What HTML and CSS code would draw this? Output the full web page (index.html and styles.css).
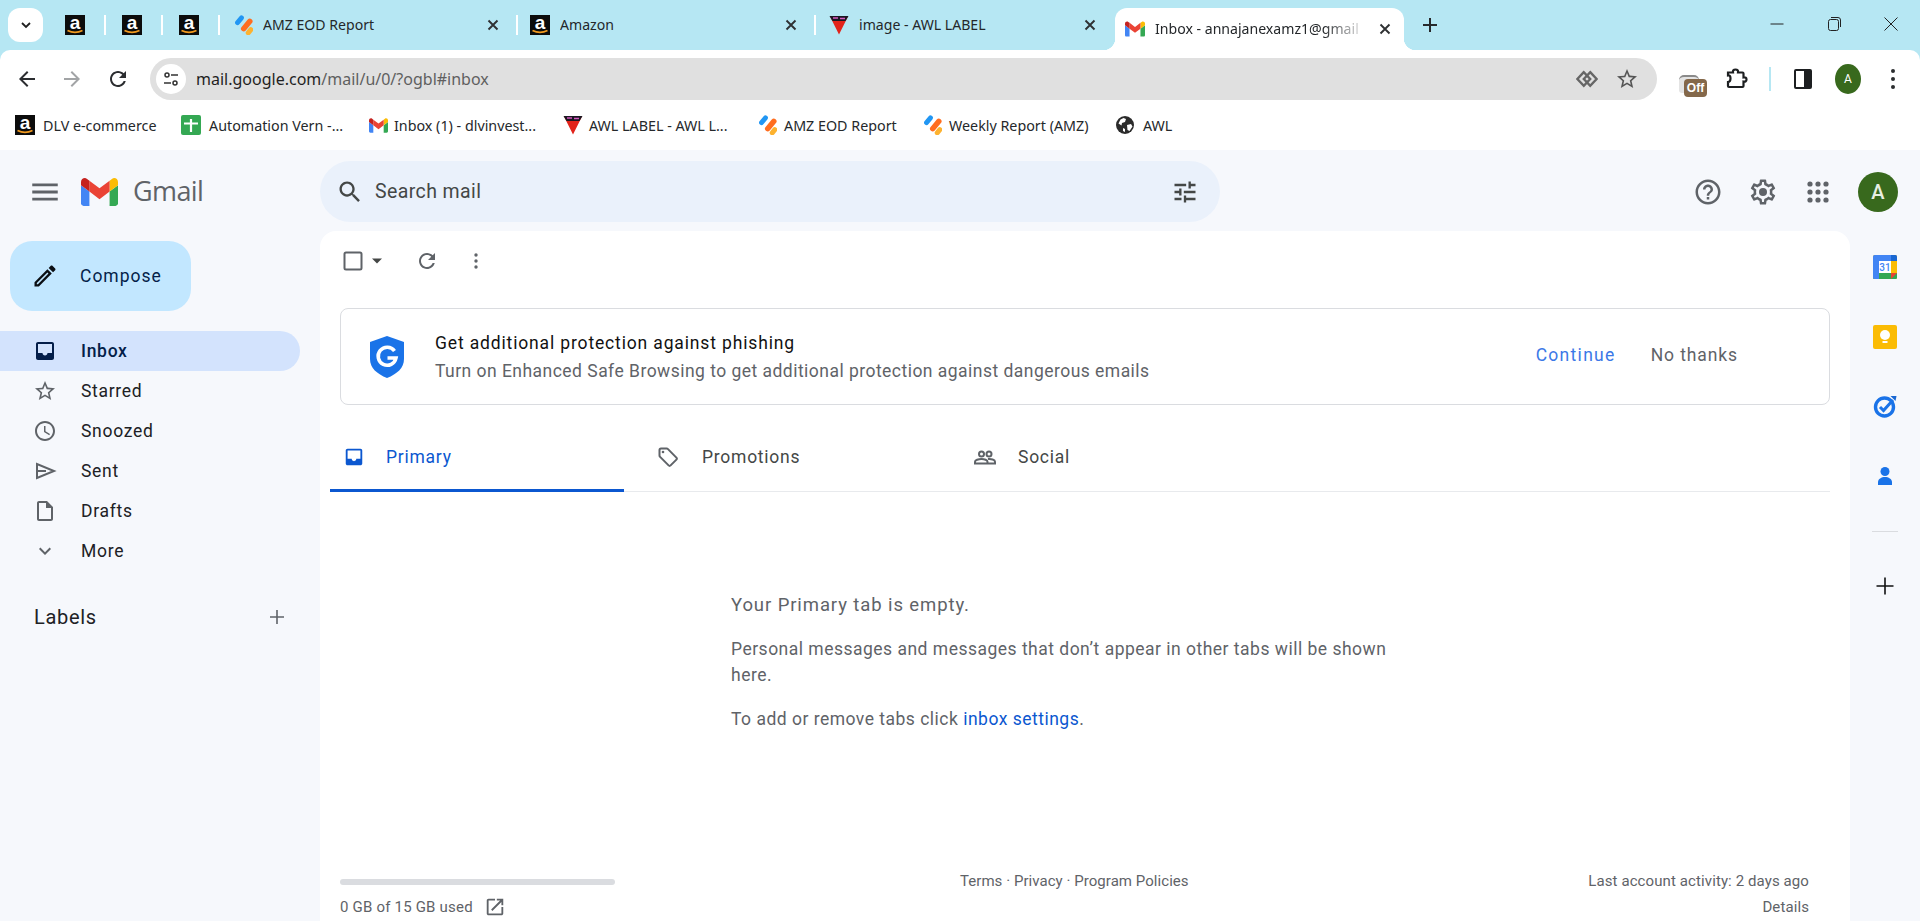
FILE: index.html
```html
<!DOCTYPE html>
<html lang="en">
<head>
<meta charset="utf-8">
<title>Inbox - Gmail</title>
<link rel="stylesheet" href="styles.css">
</head>
<body>
<svg class="defs" aria-hidden="true">
  <symbol id="gm" viewBox="52 42 88 66"><path fill="#4285f4" d="M58 108h14V74L52 59v43c0 3.32 2.69 6 6 6"/><path fill="#34a853" d="M120 108h14c3.32 0 6-2.69 6-6V59l-20 15"/><path fill="#fbbc04" d="M120 48v26l20-15v-8c0-7.42-8.47-11.65-14.4-7.2"/><path fill="#ea4335" d="M72 74V48l24 18 24-18v26L96 92"/><path fill="#c5221f" d="M52 51v8l20 15V48l-5.6-4.2c-5.94-4.45-14.4-.22-14.4 7.2"/></symbol>
  <symbol id="az" viewBox="0 0 20 20"><rect width="20" height="20" fill="#0c0c0c"/><text x="10" y="13.500" font-family="Liberation Sans" font-weight="700" font-size="19" fill="#fff" text-anchor="middle">a</text><path d="M2.500 15.500q7.500 3.600 15 0" fill="none" stroke="#f29a1f" stroke-width="1.800"/></symbol>
  <symbol id="amz" viewBox="0 0 20 20"><rect width="4.800" height="11" rx="2.400" transform="translate(8.200 -.5) rotate(40)" fill="#2196f3"/><rect width="5.400" height="15" rx="2.700" transform="translate(16.500 2.500) rotate(40)" fill="#ff6d1f"/><rect width="5" height="9" rx="2.500" transform="translate(17.500 11.200) rotate(40)" fill="#fdb22f"/></symbol>
  <symbol id="awl" viewBox="0 0 20 20"><path d="M1 1.500h18L10 19.500z" fill="#e2231a"/><path d="M.5 1h19l-3 5h-13z" fill="#1b1722"/><path d="M4 3h5M11 3.500h5" stroke="#d659c0" stroke-width="1.300"/></symbol>
  <symbol id="globe" viewBox="0 0 20 20"><circle cx="10" cy="10" r="9" fill="#2b2b2b"/><path d="M5.500 4.500l3-1.500 2.500 1-1 3-3 1-.5 2.500-3-2zM12 10l4-1 1.500 2.500-3 4.500-2-1zM8 13l2 1v3l-2-1z" fill="#fff"/></symbol>
  <symbol id="x" viewBox="0 0 16 16"><path d="M3.500 3.500l9 9m0-9l-9 9" stroke="#2f3133" stroke-width="1.900" fill="none"/></symbol>
  <symbol id="inboxfill" viewBox="0 0 24 24"><path d="M19 3H5c-1.100 0-2 .9-2 2v14c0 1.100.9 2 2 2h14c1.100 0 2-.9 2-2V5c0-1.100-.9-2-2-2zm0 11h-4.500c0 1.400-1.100 2.500-2.500 2.500S9.500 15.400 9.500 14H5V5h14z"/></symbol>
</svg>

<header class="tabstrip">
  <button class="tabsearch"><svg class="i12" viewBox="0 0 12 12"><path d="M2 4l4 4 4-4" fill="none" stroke="#1f1f1f" stroke-width="1.800"/></svg></button>
  <div class="tab pin"><svg class="fav"><use href="#az"/></svg></div>
  <div class="tab pin"><svg class="fav"><use href="#az"/></svg></div>
  <div class="tab pin"><svg class="fav"><use href="#az"/></svg></div>
  <div class="tab wide"><svg class="fav"><use href="#amz"/></svg><span class="tabtitle">AMZ EOD Report</span><svg class="tabx"><use href="#x"/></svg></div>
  <div class="tab wide"><svg class="fav"><use href="#az"/></svg><span class="tabtitle">Amazon</span><svg class="tabx"><use href="#x"/></svg></div>
  <div class="tab wide last"><svg class="fav"><use href="#awl"/></svg><span class="tabtitle">image - AWL LABEL</span><svg class="tabx"><use href="#x"/></svg></div>
  <div class="tab active"><svg class="fav"><use href="#gm"/></svg><span class="tabtitle fade">Inbox - annajanexamz1@gmail</span><svg class="tabx"><use href="#x"/></svg></div>
  <svg class="newtab" viewBox="0 0 24 24"><path d="M19 13h-6v6h-2v-6H5v-2h6V5h2v6h6v2z" fill="#27292b"/></svg>
  <div class="winctl">
    <svg class="win" viewBox="0 0 16 16"><path d="M1.500 8h13" stroke="#222" fill="none"/></svg>
    <svg class="win" viewBox="0 0 16 16"><rect x="2.500" y="3.500" width="10" height="11" rx="2" fill="none" stroke="#222"/><path d="M5 1.500h7q2.500 0 2.500 2.500v7" fill="none" stroke="#222"/></svg>
    <svg class="win" viewBox="0 0 16 16"><path d="M1.500 1.500l13 13m0-13l-13 13" stroke="#222" fill="none"/></svg>
  </div>
</header>

<nav class="toolbar">
  <svg class="tb back" viewBox="0 0 24 24"><path d="M20 11H7.830l5.590-5.590L12 4l-8 8 8 8 1.410-1.410L7.830 13H20v-2z" fill="#2b2d30"/></svg>
  <svg class="tb fwd" viewBox="0 0 24 24"><path d="M12 4l-1.410 1.410L16.170 11H4v2h12.170l-5.580 5.590L12 20l8-8z" fill="#a2a4a6"/></svg>
  <svg class="tb rel" viewBox="0 0 24 24"><path d="M17.650 6.350C16.200 4.900 14.210 4 12 4c-4.420 0-7.990 3.580-7.990 8s3.570 8 7.990 8c3.730 0 6.840-2.550 7.730-6h-2.080c-.82 2.330-3.040 4-5.650 4-3.310 0-6-2.690-6-6s2.690-6 6-6c1.660 0 3.140.69 4.220 1.780L13 11h7V4l-2.350 2.350z" fill="#2b2d30"/></svg>
  <div class="omni">
    <span class="site"><svg class="i18" viewBox="0 0 18 18"><circle cx="5" cy="5" r="2" fill="none" stroke="#333" stroke-width="1.500"/><path d="M9 5h7M2 13h7" stroke="#333" stroke-width="1.500"/><circle cx="13" cy="13" r="2" fill="none" stroke="#333" stroke-width="1.500"/></svg></span>
    <span class="url"><b>mail.google.com</b>/mail/u/0/?ogbl#inbox</span>
    <svg class="omnikey" viewBox="0 0 24 24"><path d="M8.500 4.500L1.500 12l7 7.500 7-7.500z" fill="none" stroke="#666" stroke-width="2.600"/><path d="M15.500 4.500l7 7.500-7 7.500-7-7.500z" fill="none" stroke="#666" stroke-width="2.600"/></svg>
    <svg class="omnistar" viewBox="0 0 24 24"><path d="M22 9.240l-7.190-.62L12 2 9.190 8.630 2 9.240l5.460 4.730L5.820 21 12 17.270 18.180 21l-1.630-7.030L22 9.240zM12 15.400l-3.760 2.270 1-4.280-3.320-2.880 4.380-.38L12 6.100l1.710 4.040 4.380.38-3.320 2.880 1 4.280L12 15.400z" fill="#555"/></svg>
  </div>
  <div class="ext"><span class="extcup"></span><span class="offbadge">Off</span></div>
  <svg class="puzzle" viewBox="0 0 24 24"><path d="M4 5.500h5q-.5-3 2.500-3t2.500 3h4.500q1 0 1 1v4q3-.5 3 2t-3 2v4.500q0 1-1 1H5q-1 0-1-1v-4q2.500 0 2.500-3.500T4 8.500z" fill="none" stroke="#1d1f21" stroke-width="2.200"/></svg>
  <span class="tbsep"></span>
  <svg class="panelicon" viewBox="0 0 20 24"><rect x="1" y="2" width="18" height="20" rx="2" fill="#1d1f21"/><rect x="3" y="4" width="8" height="16" fill="#fff"/></svg>
  <span class="miniavatar">A</span>
  <svg class="chromemenu" viewBox="0 0 6 22"><circle cx="3" cy="3" r="2" fill="#2b2d30"/><circle cx="3" cy="11" r="2" fill="#2b2d30"/><circle cx="3" cy="19" r="2" fill="#2b2d30"/></svg>
</nav>

<div class="bookmarks">
  <a class="bm b1"><svg class="fav"><use href="#az"/></svg>DLV e-commerce</a>
  <a class="bm b2"><svg class="fav" viewBox="0 0 20 20"><rect width="20" height="20" rx="2" fill="#34a853"/><path d="M3 8.500h14M10 4v13" stroke="#fff" stroke-width="2.200"/></svg>Automation Vern -...</a>
  <a class="bm b3"><svg class="fav gmfav"><use href="#gm"/></svg>Inbox (1) - dlvinvest...</a>
  <a class="bm b4"><svg class="fav"><use href="#awl"/></svg>AWL LABEL - AWL L...</a>
  <a class="bm b5"><svg class="fav"><use href="#amz"/></svg>AMZ EOD Report</a>
  <a class="bm b6"><svg class="fav"><use href="#amz"/></svg>Weekly Report (AMZ)</a>
  <a class="bm"><svg class="fav"><use href="#globe"/></svg>AWL</a>
</div>

<div class="gmail">
  <div class="ghead">
    <div class="brand">
      <svg class="menuicon" viewBox="0 0 24 24"><path d="M3 18h18v-2H3v2zm0-5h18v-2H3v2zm0-7v2h18V6H3z" fill="#5f6368"/></svg>
      <svg class="logo"><use href="#gm"/></svg>
      <span class="wordmark">Gmail</span>
    </div>
    <div class="search">
      <svg class="i24" viewBox="0 0 24 24"><path d="M15.500 14h-.79l-.28-.27C15.410 12.590 16 11.110 16 9.500 16 5.910 13.090 3 9.500 3S3 5.910 3 9.500 5.910 16 9.500 16c1.610 0 3.090-.59 4.230-1.570l.27.28v.79l5 4.990L20.490 19l-4.990-5zm-6 0C7.010 14 5 11.990 5 9.500S7.010 5 9.500 5 14 7.010 14 9.500 11.990 14 9.500 14z" fill="#444746"/></svg>
      <span class="searchtext">Search mail</span>
      <svg class="i28" viewBox="0 0 24 24"><path d="M3 17v2h6v-2H3zM3 5v2h10V5H3zm10 16v-2h8v-2h-8v-2h-2v6h2zM7 9v2H3v2h4v2h2V9H7zm14 4v-2H11v2h10zm-6-4h2V7h4V5h-4V3h-2v6z" fill="#444746"/></svg>
    </div>
    <div class="gactions">
      <svg class="act" viewBox="0 0 24 24"><path d="M11 18h2v-2h-2v2zm1-16C6.480 2 2 6.480 2 12s4.480 10 10 10 10-4.480 10-10S17.520 2 12 2zm0 18c-4.410 0-8-3.590-8-8s3.590-8 8-8 8 3.590 8 8-3.590 8-8 8zm0-14c-2.210 0-4 1.790-4 4h2c0-1.100.9-2 2-2s2 .9 2 2c0 2-3 1.750-3 5h2c0-2.250 3-2.500 3-5 0-2.210-1.790-4-4-4z" fill="#5f6368"/></svg>
      <svg class="act gear" viewBox="0 0 24 24"><path d="M19.430 12.980c.04-.32.07-.64.07-.98 0-.34-.03-.66-.07-.98l2.110-1.650c.19-.15.24-.42.12-.64l-2-3.460c-.09-.16-.26-.25-.44-.25-.06 0-.12.01-.17.03l-2.490 1c-.52-.4-1.080-.73-1.690-.98l-.38-2.650C14.460 2.180 14.250 2 14 2h-4c-.25 0-.46.18-.49.42l-.38 2.650c-.61.25-1.170.59-1.690.98l-2.490-1c-.06-.02-.12-.03-.18-.03-.17 0-.34.09-.43.25l-2 3.460c-.13.22-.07.49.12.64l2.110 1.650c-.04.32-.07.65-.07.98 0 .33.03.66.07.98l-2.110 1.650c-.19.15-.24.42-.12.64l2 3.460c.09.16.26.25.44.25.06 0 .12-.01.17-.03l2.490-1c.52.4 1.080.73 1.690.98l.38 2.650c.03.24.24.42.49.42h4c.25 0 .46-.18.49-.42l.38-2.650c.61-.25 1.170-.59 1.690-.98l2.490 1c.06.02.12.03.18.03.17 0 .34-.09.43-.25l2-3.460c.12-.22.07-.49-.12-.64l-2.110-1.650zm-1.980-1.710c.04.31.05.52.05.73 0 .21-.02.43-.05.73l-.14 1.130.89.7 1.080.84-.7 1.210-1.270-.51-1.040-.42-.9.68c-.43.32-.84.56-1.250.73l-1.060.43-.16 1.130-.2 1.350h-1.400l-.19-1.350-.16-1.130-1.060-.43c-.43-.18-.83-.41-1.230-.71l-.91-.7-1.060.43-1.270.51-.7-1.210 1.080-.84.89-.7-.14-1.130c-.03-.31-.05-.54-.05-.74s.02-.43.05-.73l.14-1.130-.89-.7-1.080-.84.7-1.210 1.270.51 1.040.42.9-.68c.43-.32.84-.56 1.250-.73l1.060-.43.16-1.130.2-1.350h1.390l.19 1.350.16 1.130 1.060.43c.43.18.83.41 1.230.71l.91.7 1.060-.43 1.270-.51.7 1.210-1.070.85-.89.7.14 1.130z" fill="#5f6368"/><circle cx="12" cy="12" r="3.200" fill="#5f6368"/></svg>
      <svg class="apps" viewBox="0 0 24 24"><g fill="#5f6368"><circle cx="4" cy="4" r="2.600"/><circle cx="12" cy="4" r="2.600"/><circle cx="20" cy="4" r="2.600"/><circle cx="4" cy="12" r="2.600"/><circle cx="12" cy="12" r="2.600"/><circle cx="20" cy="12" r="2.600"/><circle cx="4" cy="20" r="2.600"/><circle cx="12" cy="20" r="2.600"/><circle cx="20" cy="20" r="2.600"/></g></svg>
      <span class="bigavatar">A</span>
    </div>
  </div>

  <aside class="sidebar">
    <button class="compose"><svg class="i28" viewBox="0 0 24 24"><path d="M3 17.250V21h3.750L17.810 9.940l-3.750-3.750L3 17.250zM5.920 19H5v-.92l9.060-9.060.92.92L5.920 19zM20.710 7.040c.39-.39.39-1.020 0-1.410l-2.340-2.340c-.2-.2-.45-.29-.71-.29s-.51.1-.7.29l-1.830 1.830 3.750 3.750 1.830-1.830z" fill="#0b0f14"/></svg><span>Compose</span></button>
    <ul class="nav">
      <li class="navrow current"><svg class="i24 navinbox"><use href="#inboxfill"/></svg>Inbox</li>
      <li class="navrow"><svg class="i24" viewBox="0 0 24 24"><path d="M22 9.240l-7.190-.62L12 2 9.190 8.630 2 9.240l5.460 4.730L5.820 21 12 17.270 18.180 21l-1.630-7.030L22 9.240zM12 15.400l-3.760 2.270 1-4.280-3.320-2.880 4.380-.38L12 6.100l1.710 4.040 4.380.38-3.320 2.880 1 4.280L12 15.400z" fill="#5f6368"/></svg>Starred</li>
      <li class="navrow"><svg class="i24" viewBox="0 0 24 24"><path d="M11.990 2C6.470 2 2 6.480 2 12s4.470 10 9.990 10C17.520 22 22 17.520 22 12S17.520 2 11.990 2zM12 20c-4.420 0-8-3.580-8-8s3.580-8 8-8 8 3.580 8 8-3.580 8-8 8zm.5-13H11v6l5.250 3.150.75-1.230-4.500-2.670z" fill="#5f6368"/></svg>Snoozed</li>
      <li class="navrow"><svg class="i24" viewBox="0 0 24 24"><path d="M4 5v14l17-7z M4 12h9" fill="none" stroke="#5f6368" stroke-width="2"/></svg>Sent</li>
      <li class="navrow"><svg class="i24" viewBox="0 0 24 24"><path d="M14 2H6c-1.100 0-1.990.9-1.990 2L4 20c0 1.100.89 2 1.990 2H18c1.100 0 2-.9 2-2V8l-6-6zM6 20V4h7v5h5v11H6z" fill="#5f6368"/></svg>Drafts</li>
      <li class="navrow"><svg class="i24" viewBox="0 0 24 24"><path d="M16.590 8.590L12 13.170 7.410 8.590 6 10l6 6 6-6z" fill="#5f6368"/></svg>More</li>
    </ul>
    <div class="labels"><span>Labels</span><svg class="i24" viewBox="0 0 24 24"><path d="M19 12.800h-6.200V19h-1.600v-6.200H5v-1.600h6.200V5h1.600v6.200H19z" fill="#5f6368"/></svg></div>
  </aside>

  <main class="panel">
    <div class="listbar">
      <svg class="chk" viewBox="0 0 20 20"><rect x="1.500" y="1.500" width="17" height="17" rx="1.500" fill="none" stroke="#5f6368" stroke-width="2"/></svg>
      <svg class="caret" viewBox="0 0 10 6"><path d="M0 .5h10L5 5.500z" fill="#444746"/></svg>
      <svg class="i20 ref" viewBox="0 0 24 24"><path d="M17.650 6.350C16.200 4.900 14.210 4 12 4c-4.420 0-7.990 3.580-7.990 8s3.570 8 7.990 8c3.730 0 6.840-2.550 7.730-6h-2.080c-.82 2.330-3.040 4-5.650 4-3.310 0-6-2.690-6-6s2.690-6 6-6c1.660 0 3.140.69 4.220 1.780L13 11h7V4l-2.350 2.350z" fill="#5f6368"/></svg>
      <svg class="dots" viewBox="0 0 4 16"><circle cx="2" cy="2" r="1.700" fill="#5f6368"/><circle cx="2" cy="8" r="1.700" fill="#5f6368"/><circle cx="2" cy="14" r="1.700" fill="#5f6368"/></svg>
    </div>

    <section class="banner">
      <svg class="shield" viewBox="0 0 36 42"><path d="M18 0l17 6v17c0 9-7 15-17 19C8 38 1 32 1 23V6z" fill="#1a73e8"/><path d="M25.500 16a9 9 0 1 0 1.500 7h-8.500" fill="none" stroke="#fff" stroke-width="3.600" transform="translate(0 -1)"/></svg>
      <div class="bantext">
        <div class="bantitle">Get additional protection against phishing</div>
        <div class="bansub">Turn on Enhanced Safe Browsing to get additional protection against dangerous emails</div>
      </div>
      <a class="continue">Continue</a>
      <a class="nothanks">No thanks</a>
    </section>

    <div class="tabs">
      <div class="gtab on"><svg class="i22"><use href="#inboxfill"/></svg><span>Primary</span></div>
      <div class="gtab promo"><svg class="i24" viewBox="0 0 24 24"><path d="M3.500 5v5.500q0 .8.600 1.400l8.500 8.500q1 1 2 0l5.800-5.800q1-1 0-2L12 4.100q-.6-.6-1.400-.6H5Q3.500 3.500 3.500 5z" fill="none" stroke="#5f6368" stroke-width="2"/><circle cx="7" cy="7" r="1.300" fill="#5f6368"/></svg><span>Promotions</span></div>
      <div class="gtab soc"><svg class="i24" viewBox="0 0 24 24"><g fill="none" stroke="#5f6368" stroke-width="2"><circle cx="8.500" cy="9" r="2.500"/><circle cx="16" cy="9" r="2.500"/><path d="M2 18.500v-1.800c0-1.500 3.500-2.700 6.500-2.700s6 1.200 6 2.700v1.800zM15 14.100c3-.5 7 .8 7 2.600v1.800h-7"/></g></svg><span>Social</span></div>
    </div>

    <div class="empty">
      <p class="emptyhead">Your Primary tab is empty.</p>
      <p class="emptymsg">Personal messages and messages that don’t appear in other tabs will be shown here.</p>
      <p class="emptylink">To add or remove tabs click <a>inbox settings</a>.</p>
    </div>

    <footer class="foot">
      <div class="storage">
        <div class="storebar"></div>
        <div class="storetext">0 GB of 15 GB used <svg class="i22 storeopen" viewBox="0 0 24 24"><path d="M19 19H5V5h7V3H5c-1.110 0-2 .9-2 2v14c0 1.100.89 2 2 2h14c1.100 0 2-.9 2-2v-7h-2v7zM14 3v2h3.590l-9.830 9.830 1.410 1.410L19 6.410V10h2V3h-7z" fill="#5f6368"/></svg></div>
      </div>
      <div class="terms">Terms · Privacy · Program Policies</div>
      <div class="activity"><div>Last account activity: 2 days ago</div><div class="details">Details</div></div>
    </footer>
  </main>

  <aside class="addons">
    <div class="addon"><svg class="i24" viewBox="0 0 24 24"><rect width="24" height="24" rx="1.500" fill="#fbbc04"/><path d="M0 18h24v4.500q0 1.500-1.500 1.500H1.500Q0 24 0 22.500z" fill="#34a853"/><path d="M0 1.500Q0 0 1.500 0H18v6H6v18H1.500Q0 24 0 22.500z" fill="#4285f4"/><path d="M18 0h4.500Q24 0 24 1.500V6h-6z" fill="#1967d2"/><rect x="6" y="6" width="12" height="12" fill="#fff"/><path d="M18 18h6l-6 6z" fill="#ea4335"/><text x="12" y="15.600" text-anchor="middle" font-family="Roboto" font-size="10" font-weight="500" fill="#4285f4">31</text></svg></div>
    <div class="addon"><svg class="i24" viewBox="0 0 24 24"><rect width="24" height="24" rx="2" fill="#fbbc04"/><circle cx="12" cy="10" r="5" fill="#fff"/><rect x="9.500" y="16" width="5" height="2" fill="#fff"/></svg></div>
    <div class="addon"><svg class="i24" viewBox="0 0 24 24"><circle cx="11.500" cy="12" r="9" fill="none" stroke="#1a73e8" stroke-width="3.400"/><path d="M7 12l3.500 3.500L20 5" fill="none" stroke="#1a73e8" stroke-width="3"/><path d="M17.500 1l6 0-1 5z" fill="#1967d2"/></svg></div>
    <div class="addon"><svg class="i24" viewBox="0 0 24 24"><circle cx="12" cy="6.500" r="4.500" fill="#1a73e8"/><path d="M5 20v-3c0-3 3.500-5 7-5s7 2 7 5v3z" fill="#1a73e8"/></svg></div>
    <div class="addonsep"></div>
    <svg class="i24 addonplus" viewBox="0 0 24 24"><path d="M20.500 12.800h-7.700v7.700h-1.600v-7.700H3.500v-1.600h7.700V3.500h1.600v7.700h7.700z" fill="#111"/></svg>
  </aside>
</div>
</body>
</html>
```

FILE: styles.css
```css
* { box-sizing: border-box; }
html, body { margin: 0; height: 921px; overflow: hidden; }
body { font-family: Roboto, "Liberation Sans", sans-serif; background: #b6e7f3; color: #202124; }
.defs { display: none; }
svg { display: block; flex: none; }
p { margin: 0; }
ul { list-style: none; margin: 0; padding: 0; }
button { border: 0; font: inherit; padding: 0; }

.i12 { width: 12px; height: 12px; }
.i18 { width: 18px; height: 18px; }
.i20 { width: 20px; height: 20px; }
.i22 { width: 22px; height: 22px; }
.i24 { width: 24px; height: 24px; }
.i28 { width: 28px; height: 28px; }
.fav { width: 20px; height: 20px; }

/* tab strip */
.tabstrip { display: flex; height: 50px; align-items: flex-start; padding-left: 8px; }
.tabsearch { width: 35px; height: 34px; margin: 8px 6px 0 0; border-radius: 12px; background: #fff; display: flex; align-items: center; justify-content: center; }
.tab { display: flex; align-items: center; height: 20px; margin-top: 15px; border-right: 2px solid #fff; font: 14.100px "Noto Sans", sans-serif; color: #24272a; }
.pin { width: 57px; padding-left: 16px; }
.wide { width: 298px; padding-left: 13px; }
.wide + .wide { padding-left: 12px; }
.last { width: 299px; border-right: 0; padding-left: 13px !important; }
.last .tabx { margin-right: 17px; }
.tabtitle { flex: 1; margin-left: 10px; padding-bottom: 2px; white-space: nowrap; overflow: hidden; }
.fade { -webkit-mask-image: linear-gradient(90deg, #000 82%, rgba(0,0,0,.2)); mask-image: linear-gradient(90deg, #000 82%, rgba(0,0,0,.2)); flex: none; width: 204px; }
.tabx { width: 16px; height: 16px; margin-right: 15px; }
.active { position: relative; width: 289px; height: 42px; margin: 8px 0 0 0; border: 0; border-radius: 12px 12px 0 0; background: #fff; padding-left: 10px; }
.active .tabx { margin: 0 11px 0 auto; }
.active::before, .active::after { content: ""; position: absolute; bottom: 0; width: 12px; height: 12px; }
.active::before { left: -12px; background: radial-gradient(circle at 0 0, transparent 12px, #fff 12.500px); }
.active::after { right: -12px; background: radial-gradient(circle at 100% 0, transparent 12px, #fff 12.500px); }
.newtab { width: 24px; height: 24px; margin: 13px 0 0 14px; }
.winctl { display: flex; gap: 41px; margin: 16px 21px 0 auto; }
.win { width: 16px; height: 16px; }

/* toolbar */
.toolbar { display: flex; align-items: center; height: 50px; padding-top: 8px; background: #fff; border-radius: 10px 10px 0 0; }
.tb { width: 24px; height: 24px; }
.back { margin-left: 15px; }
.fwd { margin-left: 21px; }
.rel { margin-left: 22px; }
.omni { display: flex; align-items: center; width: 1507px; height: 42px; margin-left: 20px; padding: 0 18px 0 6px; border-radius: 21px; background: #e0e0e0; }
.site { display: flex; align-items: center; justify-content: center; width: 30px; height: 30px; border-radius: 50%; background: #fff; }
.url { flex: 1; margin-left: 10px; font: 16px "Noto Sans", sans-serif; color: #5f5f5f; }
.url b { font-weight: 400; color: #1f1f1f; }
.omnikey { width: 22px; height: 22px; }
.omnistar { width: 24px; height: 24px; margin-left: 17px; }
.ext { position: relative; width: 30px; height: 32px; margin: 0 0 0 22px; }
.extcup { position: absolute; left: 0; top: 12px; width: 20px; height: 18px; border-radius: 5px 5px 3px 3px; background: #e4e4e4; border-top: 2px solid #8a8a8a; }
.offbadge { position: absolute; left: 5px; top: 16px; width: 23px; height: 18px; border-radius: 4px; background: #84684a; color: #fff; font: 700 12px/18px "Liberation Sans", sans-serif; text-align: center; }
.puzzle { width: 24px; height: 24px; margin-left: 15px; }
.tbsep { width: 2px; height: 24px; margin-left: 21px; background: #b6e7f3; }
.panelicon { width: 20px; height: 24px; margin-left: 22px; }
.miniavatar { width: 26px; height: 30px; margin-left: 22px; border-radius: 50%; background: #38691d; color: #fff; font: 12px/30px Roboto, sans-serif; text-align: center; }
.chromemenu { width: 6px; height: 22px; margin-left: 29px; }

/* bookmarks */
.bookmarks { display: flex; align-items: center; height: 50px; padding-left: 15px; background: #fff; }
.bm { display: flex; align-items: center; gap: 8px; font: 14.300px "Noto Sans", sans-serif; color: #25282b; white-space: nowrap; }
.b1 { width: 166px; }
.b2 { width: 188px; }
.b3 { width: 194px; gap: 6px; }
.b4 { width: 194px; gap: 6px; }
.b5 { width: 165px; gap: 7px; }
.b6 { width: 193px; gap: 7px; }
.gmfav { width: 19px; height: 15px; }

/* gmail shell */
.gmail { display: grid; grid-template-columns: 320px 1530px 70px; grid-template-rows: 81px 690px; height: 771px; background: #f6f8fc; }
.ghead { grid-column: 1 / 4; display: flex; padding: 11px 0 9px; }
.brand { display: flex; align-items: center; width: 320px; padding-left: 28px; }
.menuicon { width: 34px; height: 34px; }
.logo { width: 37px; height: 28px; margin-left: 19px; }
.wordmark { margin-left: 15px; padding-bottom: 2px; font: 500 27px "Open Sans", Roboto, sans-serif; letter-spacing: -.6px; color: #5f6368; }
.search { display: flex; align-items: center; width: 900px; height: 61px; padding: 0 21px 0 16px; border-radius: 31px; background: #eaf1fb; }
.search .i24 { width: 28px; height: 28px; }
.searchtext { flex: 1; margin-left: 11px; font-size: 19.500px; letter-spacing: .4px; color: #444746; }
.gactions { display: flex; align-items: center; margin-left: auto; padding-right: 22px; }
.act { width: 30px; height: 30px; margin-right: 25px; }
.gear { margin-right: 28px; }
.apps { width: 24px; height: 24px; margin-right: 28px; }
.bigavatar { width: 40px; height: 40px; border-radius: 50%; background: #38691d; color: #e8efe2; font: 500 20px/40px Roboto, sans-serif; text-align: center; }

/* sidebar */
.sidebar { padding-top: 10px; }
.compose { display: flex; align-items: center; width: 181px; height: 70px; margin-left: 10px; padding-left: 21px; border-radius: 22px; background: #c2e7ff; color: #041e49; font-size: 17.500px; font-weight: 400; letter-spacing: 1px; cursor: pointer; }
.compose span { margin-left: 21px; }
.nav { margin-top: 20px; }
.navrow { display: flex; align-items: center; gap: 24px; width: 300px; height: 40px; padding-left: 33px; border-radius: 0 20px 20px 0; font-size: 17.500px; letter-spacing: .7px; color: #202124; }
.current { background: #d3e3fd; color: #041e49; font-weight: 500; }
.navinbox { fill: #041e49; }
.labels { display: flex; align-items: center; justify-content: space-between; width: 289px; height: 40px; margin-top: 26px; padding: 0 0 0 34px; font-size: 20px; letter-spacing: .7px; }

/* main panel */
.panel { display: flex; flex-direction: column; background: #fff; border-radius: 16px 16px 0 0; }
.listbar { display: flex; align-items: center; flex: none; height: 60px; padding-left: 23px; }
.chk { width: 20px; height: 20px; }
.caret { width: 10px; height: 6px; margin-left: 9px; }
.ref { width: 24px; height: 24px; margin-left: 33px; }
.dots { width: 4px; height: 16px; margin-left: 35px; }
.banner { display: flex; align-items: center; flex: none; height: 97px; margin: 17px 20px 0; padding: 0 0 0 28px; border: 1px solid #dadce0; border-radius: 8px; }
.shield { width: 36px; height: 42px; }
.bantext { flex: 1; margin-left: 30px; }
.bantitle { font-size: 17.500px; letter-spacing: .85px; line-height: 26px; color: #111; }
.bansub { margin-top: 2px; font-size: 17.500px; letter-spacing: .47px; line-height: 26px; color: #5f6368; }
.continue { margin-bottom: 4px; color: #3b78e7; font-size: 17.500px; letter-spacing: 1.300px; }
.nothanks { margin: 0 91px 4px 35px; color: #5f6368; font-size: 17.500px; letter-spacing: .9px; }
.tabs { display: flex; flex: none; height: 87px; margin: 0 20px 0 10px; padding-top: 18px; border-bottom: 1px solid #e8eaed; }
.gtab { display: flex; align-items: center; gap: 21px; height: 69px; padding: 0 0 2px 13px; font-size: 17.500px; letter-spacing: .75px; color: #444746; }
.gtab.on { width: 294px; padding-top: 2px; padding-bottom: 0; border-bottom: 3px solid #0b57d0; color: #0b57d0; fill: #0b57d0; }
.promo { width: 315px; padding-left: 32px; gap: 22px; }
.soc { padding-left: 0; gap: 21px; margin-left: 34px; }
.empty { flex: 1; padding: 100px 0 0 411px; width: 1090px; font-size: 17.500px; letter-spacing: .49px; color: #5f6368; line-height: 26px; }
.emptyhead { font-size: 18.500px; letter-spacing: .9px; }
.emptymsg { margin-top: 18px; }
.emptylink { margin-top: 18px; }
.empty a { color: #0b57d0; }
.foot { display: flex; flex: none; height: 51px; padding: 0 41px 0 20px; font-size: 15px; color: #5f6368; }
.storage { width: 275px; padding-top: 9px; }
.storebar { height: 6px; border-radius: 3px; background: #dadce0; }
.storetext { display: flex; align-items: center; gap: 11px; margin-top: 11px; white-space: nowrap; letter-spacing: .2px; }
.terms { margin: 2px 0 0 345px; letter-spacing: .05px; }
.activity { margin: 2px 0 0 auto; text-align: right; letter-spacing: .1px; }
.details { margin-top: 8px; }

/* add-on rail */
.addons { display: flex; flex-direction: column; align-items: center; padding-top: 1px; }
.addon { display: flex; align-items: center; justify-content: center; width: 100%; height: 70px; }
.addonsep { width: 26px; height: 1px; margin-top: 19px; background: #dadce0; }
.addonplus { margin-top: 42px; }
```
